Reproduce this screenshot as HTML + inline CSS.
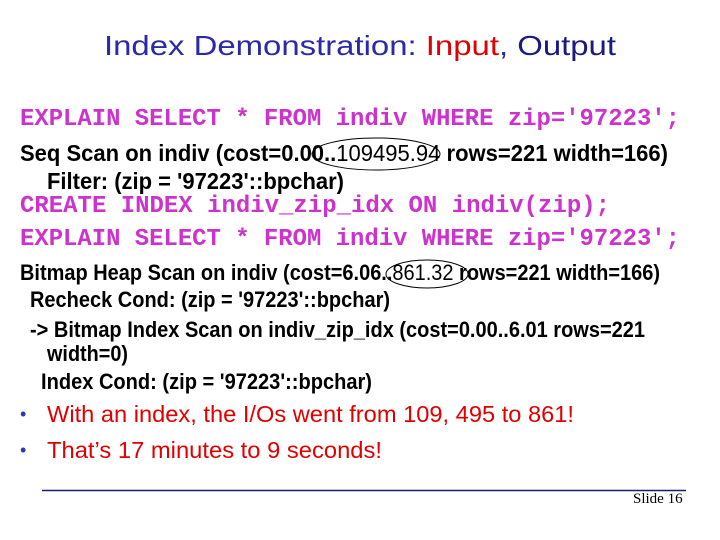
<!DOCTYPE html>
<html><head><style>
body{margin:0;width:720px;height:540px;background:#fff;position:relative;overflow:hidden;font-family:"Liberation Sans",sans-serif}
.l{position:absolute;white-space:nowrap;transform-origin:0 50%;line-height:1}
.sql{font-family:"Liberation Mono",monospace;color:#cc33cc;font-size:24px;font-weight:bold}
.b{font-weight:bold;font-size:22px;color:#000}
.bu{color:#e00000;font-size:23px}
.dot{position:absolute;color:#3333bb;font-size:18px}
</style></head><body>
<div class="l" id="t" style="left:104px;top:32px;font-size:28px;color:#2a2aa8">Index Demonstration: <span style="color:#e00000">Input</span>, <span style="color:#1a1a80">Output</span></div>
<div class="l sql w" style="left:20px;top:108px">EXPLAIN SELECT * FROM indiv WHERE zip='97223';</div>
<div class="l b w" style="left:20px;top:142px;font-size:23px">Seq Scan on indiv (cost=0.00..<span style="font-weight:normal">109495.94</span> rows=221 width=166)</div>
<div class="l b w" style="left:47px;top:170px;font-size:23px">Filter: (zip = '97223'::bpchar)</div>
<div class="l sql w" style="left:20px;top:195px">CREATE INDEX indiv_zip_idx ON indiv(zip);</div>
<div class="l sql w" style="left:20px;top:228px">EXPLAIN SELECT * FROM indiv WHERE zip='97223';</div>
<div class="l b w" style="left:20px;top:262px">Bitmap Heap Scan on indiv (cost=6.06..<span style="font-weight:normal">861.32</span> rows=221 width=166)</div>
<div class="l b w" style="left:30px;top:289px">Recheck Cond: (zip = '97223'::bpchar)</div>
<div class="l b w" style="left:30px;top:319px">-&gt; Bitmap Index Scan on indiv_zip_idx (cost=0.00..6.01 rows=221</div>
<div class="l b w" style="left:47px;top:343px">width=0)</div>
<div class="l b w" style="left:41px;top:371px">Index Cond: (zip = '97223'::bpchar)</div>
<div class="dot" style="left:20px;top:404px">•</div>
<div class="l bu w" style="left:47px;top:403px">With an index, the I/Os went from 109, 495 to 861!</div>
<div class="dot" style="left:20px;top:440px">•</div>
<div class="l bu w" style="left:47px;top:439px">That’s 17 minutes to 9 seconds!</div>
<svg style="position:absolute;left:0;top:0" width="720" height="540">
<ellipse cx="376" cy="154" rx="64" ry="16" fill="none" stroke="#000" stroke-width="1"/>
<ellipse cx="427" cy="274" rx="41" ry="14" fill="none" stroke="#000" stroke-width="1"/>
<line x1="42" y1="490.5" x2="686" y2="490.5" stroke="#1a1a6e" stroke-width="1.5"/>
</svg>
<div class="l" style="left:633px;top:492px;font-family:'Liberation Serif',serif;font-size:15px">Slide 16</div>
<script>
var W=[660,648,297,590,660,640,360,615,81,331,527,335];
var els=document.querySelectorAll('.w');
for(var i=0;i<els.length;i++){var w=els[i].getBoundingClientRect().width;els[i].style.transform='scaleX('+(W[i]/w)+')';}
var t=document.getElementById('t');t.style.transform='scaleX('+(512/t.getBoundingClientRect().width)+')';
</script>
</body></html>
